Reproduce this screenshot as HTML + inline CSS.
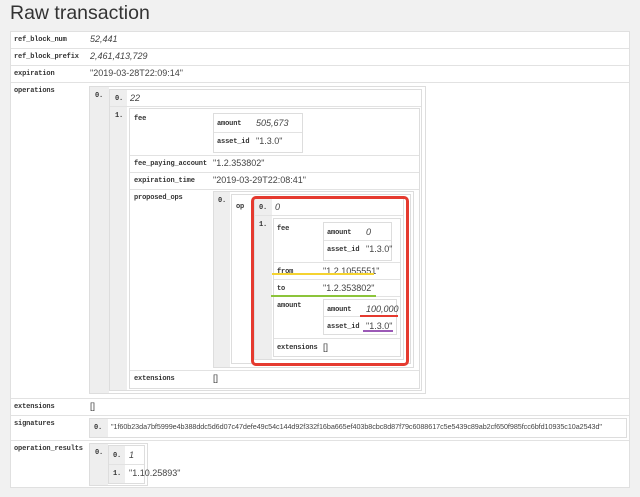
<!DOCTYPE html>
<html><head><meta charset="utf-8"><style>
*{margin:0;padding:0;box-sizing:border-box}
body{width:640px;height:497px;background:#f1f1f1;position:relative;overflow:hidden;font-family:"Liberation Sans",sans-serif;color:#333}
div,span{position:absolute}
.b{border:1px solid #ddd;background:#fff}
.g{background:#eee}
.h{height:1px;background:#e2e2e2}
.k{font-family:"Liberation Mono",monospace;font-weight:bold;font-size:7px;letter-spacing:-0.15px;color:#333;white-space:nowrap;margin-top:1px}
.v{font-size:9px;color:#444;white-space:nowrap}
.i{font-style:italic}
.u{height:2px}
</style></head><body>
<span style="left:10px;top:2px;font-size:19.5px;color:#333">Raw transaction</span>
<div class="b" style="left:10px;top:31px;width:620px;height:457px;border-color:#e0e0e0"></div>
<div class="h" style="left:11px;top:48px;width:618px"></div>
<div class="h" style="left:11px;top:65px;width:618px"></div>
<div class="h" style="left:11px;top:82px;width:618px"></div>
<div class="h" style="left:11px;top:398px;width:618px"></div>
<div class="h" style="left:11px;top:415px;width:618px"></div>
<div class="h" style="left:11px;top:440px;width:618px"></div>

<span class="k" style="left:14px;top:35px">ref_block_num</span><span class="v i" style="left:90px;top:34px">52,441</span>
<span class="k" style="left:14px;top:52px">ref_block_prefix</span><span class="v i" style="left:90px;top:51px">2,461,413,729</span>
<span class="k" style="left:14px;top:69px">expiration</span><span class="v" style="left:90px;top:68px">"2019-03-28T22:09:14"</span>
<span class="k" style="left:14px;top:86px">operations</span>
<span class="k" style="left:14px;top:402px">extensions</span><span class="v" style="left:90px;top:401px">[]</span>
<span class="k" style="left:14px;top:419px">signatures</span>
<span class="k" style="left:14px;top:444px">operation_results</span>

<div class="b" style="left:89px;top:86px;width:337px;height:308px"></div>
<div class="g" style="left:90px;top:87px;width:19px;height:306px"></div>
<span class="k" style="left:95px;top:91px">0.</span>
<div class="b" style="left:109px;top:89px;width:313px;height:302px"></div>
<div class="g" style="left:110px;top:90px;width:17px;height:300px"></div>
<div class="h" style="left:110px;top:106px;width:311px"></div>
<span class="k" style="left:115px;top:94px">0.</span><span class="v i" style="left:130px;top:93px">22</span>
<span class="k" style="left:115px;top:111px">1.</span>
<div class="b" style="left:129px;top:108px;width:291px;height:281px"></div>
<div class="h" style="left:130px;top:155px;width:289px"></div>
<div class="h" style="left:130px;top:172px;width:289px"></div>
<div class="h" style="left:130px;top:189px;width:289px"></div>
<div class="h" style="left:130px;top:370px;width:289px"></div>
<span class="k" style="left:134px;top:114px">fee</span>
<div class="b" style="left:213px;top:113px;width:90px;height:40px"></div>
<div class="h" style="left:214px;top:132px;width:88px"></div>
<span class="k" style="left:217px;top:119px">amount</span><span class="v i" style="left:256px;top:118px">505,673</span>
<span class="k" style="left:217px;top:137px">asset_id</span><span class="v" style="left:256px;top:136px">"1.3.0"</span>
<span class="k" style="left:134px;top:159px">fee_paying_account</span><span class="v" style="left:213px;top:158px">"1.2.353802"</span>
<span class="k" style="left:134px;top:176px">expiration_time</span><span class="v" style="left:213px;top:175px">"2019-03-29T22:08:41"</span>
<span class="k" style="left:134px;top:193px">proposed_ops</span>
<span class="k" style="left:134px;top:374px">extensions</span><span class="v" style="left:213px;top:373px">[]</span>

<div class="b" style="left:213px;top:191px;width:201px;height:177px"></div>
<div class="g" style="left:214px;top:192px;width:16px;height:175px"></div>
<span class="k" style="left:218px;top:196px">0.</span>
<div class="b" style="left:231px;top:194px;width:180px;height:170px"></div>
<span class="k" style="left:236px;top:202px">op</span>
<div class="b" style="left:254px;top:198px;width:150px;height:162px"></div>
<div class="g" style="left:255px;top:199px;width:17px;height:160px"></div>
<div class="h" style="left:255px;top:215px;width:148px"></div>
<span class="k" style="left:259px;top:203px">0.</span><span class="v i" style="left:275px;top:202px">0</span>
<span class="k" style="left:259px;top:220px">1.</span>
<div class="b" style="left:273px;top:218px;width:128px;height:139px"></div>
<div class="h" style="left:274px;top:262px;width:126px"></div>
<div class="h" style="left:274px;top:279px;width:126px"></div>
<div class="h" style="left:274px;top:296px;width:126px"></div>
<div class="h" style="left:274px;top:338px;width:126px"></div>
<span class="k" style="left:277px;top:224px">fee</span>
<div class="b" style="left:323px;top:222px;width:69px;height:39px"></div>
<div class="h" style="left:324px;top:240px;width:67px"></div>
<span class="k" style="left:327px;top:228px">amount</span><span class="v i" style="left:366px;top:227px">0</span>
<span class="k" style="left:327px;top:245px">asset_id</span><span class="v" style="left:366px;top:244px">"1.3.0"</span>
<span class="k" style="left:277px;top:267px">from</span><span class="v" style="left:323px;top:266px">"1.2.1055551"</span>
<span class="k" style="left:277px;top:284px">to</span><span class="v" style="left:323px;top:283px">"1.2.353802"</span>
<span class="k" style="left:277px;top:301px">amount</span>
<div class="b" style="left:323px;top:299px;width:74px;height:36px"></div>
<div class="h" style="left:324px;top:316px;width:72px"></div>
<span class="k" style="left:327px;top:305px">amount</span><span class="v i" style="left:366px;top:304px">100,000</span>
<span class="k" style="left:327px;top:322px">asset_id</span><span class="v" style="left:366px;top:321px">"1.3.0"</span>
<span class="k" style="left:277px;top:343px">extensions</span><span class="v" style="left:323px;top:342px">[]</span>

<div style="left:251px;top:196px;width:158px;height:170px;border:3px solid #e53a2f;border-radius:5px"></div>
<div class="u" style="left:272px;top:273px;width:102px;background:#f5d330"></div>
<div class="u" style="left:271px;top:295px;width:105px;background:#8cc43a"></div>
<div class="u" style="left:360px;top:315px;width:38px;background:#e53a2f"></div>
<div class="u" style="left:363px;top:330px;width:30px;background:#9b59b6"></div>

<div class="b" style="left:89px;top:418px;width:538px;height:20px"></div>
<div class="g" style="left:90px;top:419px;width:18px;height:18px"></div>
<span class="k" style="left:94px;top:423px">0.</span>
<span class="v" style="left:111px;top:422px;font-size:7.2px;letter-spacing:-0.05px">"1f60b23da7bf5999e4b388ddc5d6d07c47defe49c54c144d92f332f16ba665ef403b8cbc8d87f79c6088617c5e5439c89ab2cf650f985fcc6bfd10935c10a2543d"</span>

<div class="b" style="left:89px;top:443px;width:59px;height:43px"></div>
<div class="g" style="left:90px;top:444px;width:18px;height:41px"></div>
<span class="k" style="left:95px;top:448px">0.</span>
<div class="b" style="left:108px;top:445px;width:37px;height:39px"></div>
<div class="g" style="left:109px;top:446px;width:16px;height:37px"></div>
<div class="h" style="left:109px;top:464px;width:35px"></div>
<span class="k" style="left:113px;top:451px">0.</span><span class="v i" style="left:129px;top:450px">1</span>
<span class="k" style="left:113px;top:469px">1.</span><span class="v" style="left:129px;top:468px">"1.10.25893"</span>
</body></html>
